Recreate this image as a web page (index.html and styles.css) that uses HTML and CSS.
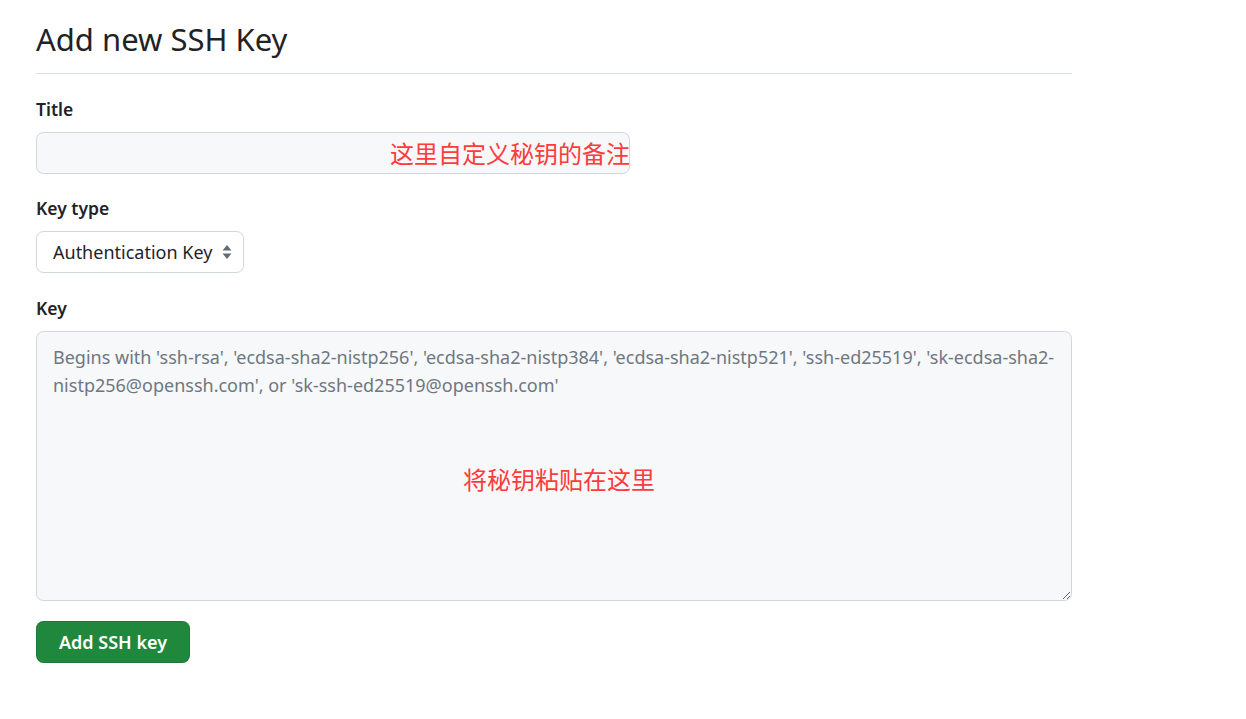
FILE: index.html
```html
<!DOCTYPE html>
<html lang="zh">
<head>
<meta charset="utf-8">
<title>Add new SSH Key</title>
<link rel="stylesheet" href="styles.css">
</head>
<body>
<div class="page">
  <div class="subhead">
    <h2 class="subhead-heading">Add new SSH Key</h2>
  </div>
  <form class="form">
    <div class="form-group group-title">
      <label class="label" for="title">Title</label>
      <div class="field-wrap title-wrap">
        <input id="title" class="form-control title-input" type="text">
        <span class="note note-title">这里自定义秘钥的备注</span>
      </div>
    </div>
    <div class="form-group">
      <label class="label" for="type">Key type</label>
      <div class="select">
        <span class="select-text">Authentication Key</span>
        <svg class="select-arrow" width="10" height="16" viewBox="0 0 10 16"><path d="M5 1 L9.5 6.5 L0.5 6.5 Z" fill="#636c76"/><path d="M5 15 L9.5 9.5 L0.5 9.5 Z" fill="#636c76"/></svg>
      </div>
    </div>
    <div class="form-group">
      <label class="label" for="key">Key</label>
      <div class="field-wrap key-wrap">
        <textarea id="key" class="form-control key-input" placeholder="Begins with 'ssh-rsa', 'ecdsa-sha2-nistp256', 'ecdsa-sha2-nistp384', 'ecdsa-sha2-nistp521', 'ssh-ed25519', 'sk-ecdsa-sha2-nistp256@openssh.com', or 'sk-ssh-ed25519@openssh.com'"></textarea>
        <span class="note note-key">将秘钥粘贴在这里</span>
      </div>
    </div>
    <button type="button" class="btn-primary">Add SSH key</button>
  </form>
</div>
</body>
</html>
```

FILE: styles.css
```css
* { box-sizing: border-box; }
html, body { margin: 0; padding: 0; background: #ffffff; }
body {
  font-family: "Noto Sans", "Open Sans", "Noto Sans CJK SC", sans-serif;
  color: #1f2328;
  font-size: 18px;
}
.page {
  width: 1036px;
  margin-left: 36px;
  padding-top: 20px;
}
.subhead {
  border-bottom: 1px solid #d8dee4;
  padding-bottom: 15px;
}
.subhead-heading {
  margin: 0;
  font-size: 31px;
  font-weight: 400;
  line-height: 38px;
  color: #1f2328;
}
.form { padding-top: 23px; }
.form-group { margin-bottom: 23px; }
.group-title { margin-bottom: 22px; }
.label {
  display: block;
  font-weight: 600;
  font-size: 17.5px;
  line-height: 25px;
  margin-bottom: 10px;
}
.field-wrap { position: relative; }
.form-control {
  display: block;
  border: 1px solid #d0d7de;
  border-radius: 7.5px;
  background: #f6f8fa;
  font-family: inherit;
  font-size: 18px;
  color: #1f2328;
  outline: none;
}
.title-input {
  width: 594px;
  height: 42px;
  padding: 0 15px;
}
.select {
  display: flex;
  align-items: center;
  width: 208px;
  height: 42px;
  padding: 0 11px 0 16px;
  border: 1px solid #d0d7de;
  border-radius: 7.5px;
  background: #ffffff;
  justify-content: space-between;
}
.select-text { font-size: 18px; color: #1f2328; }
.select-arrow { display: block; }
.key-input {
  width: 1036px;
  height: 270px;
  padding: 11px 16px;
  line-height: 28px;
  resize: vertical;
}
.key-input::placeholder { color: #6e7781; opacity: 1; }
.note {
  position: absolute;
  font-family: "Noto Sans CJK SC", sans-serif;
  font-size: 24px;
  line-height: 30px;
  color: #ff3b3b;
  white-space: nowrap;
  pointer-events: none;
}
.note-title { left: 354px; top: 6px; }
.note-key { left: 427px; top: 133px; }
.btn-primary {
  display: block;
  width: 154px;
  height: 42px;
  margin-top: -3px;
  border: 1px solid rgba(31, 35, 40, 0.15);
  border-radius: 7.5px;
  background: #1f883d;
  color: #ffffff;
  font-family: inherit;
  font-size: 18px;
  font-weight: 600;
  padding: 0;
}
```
